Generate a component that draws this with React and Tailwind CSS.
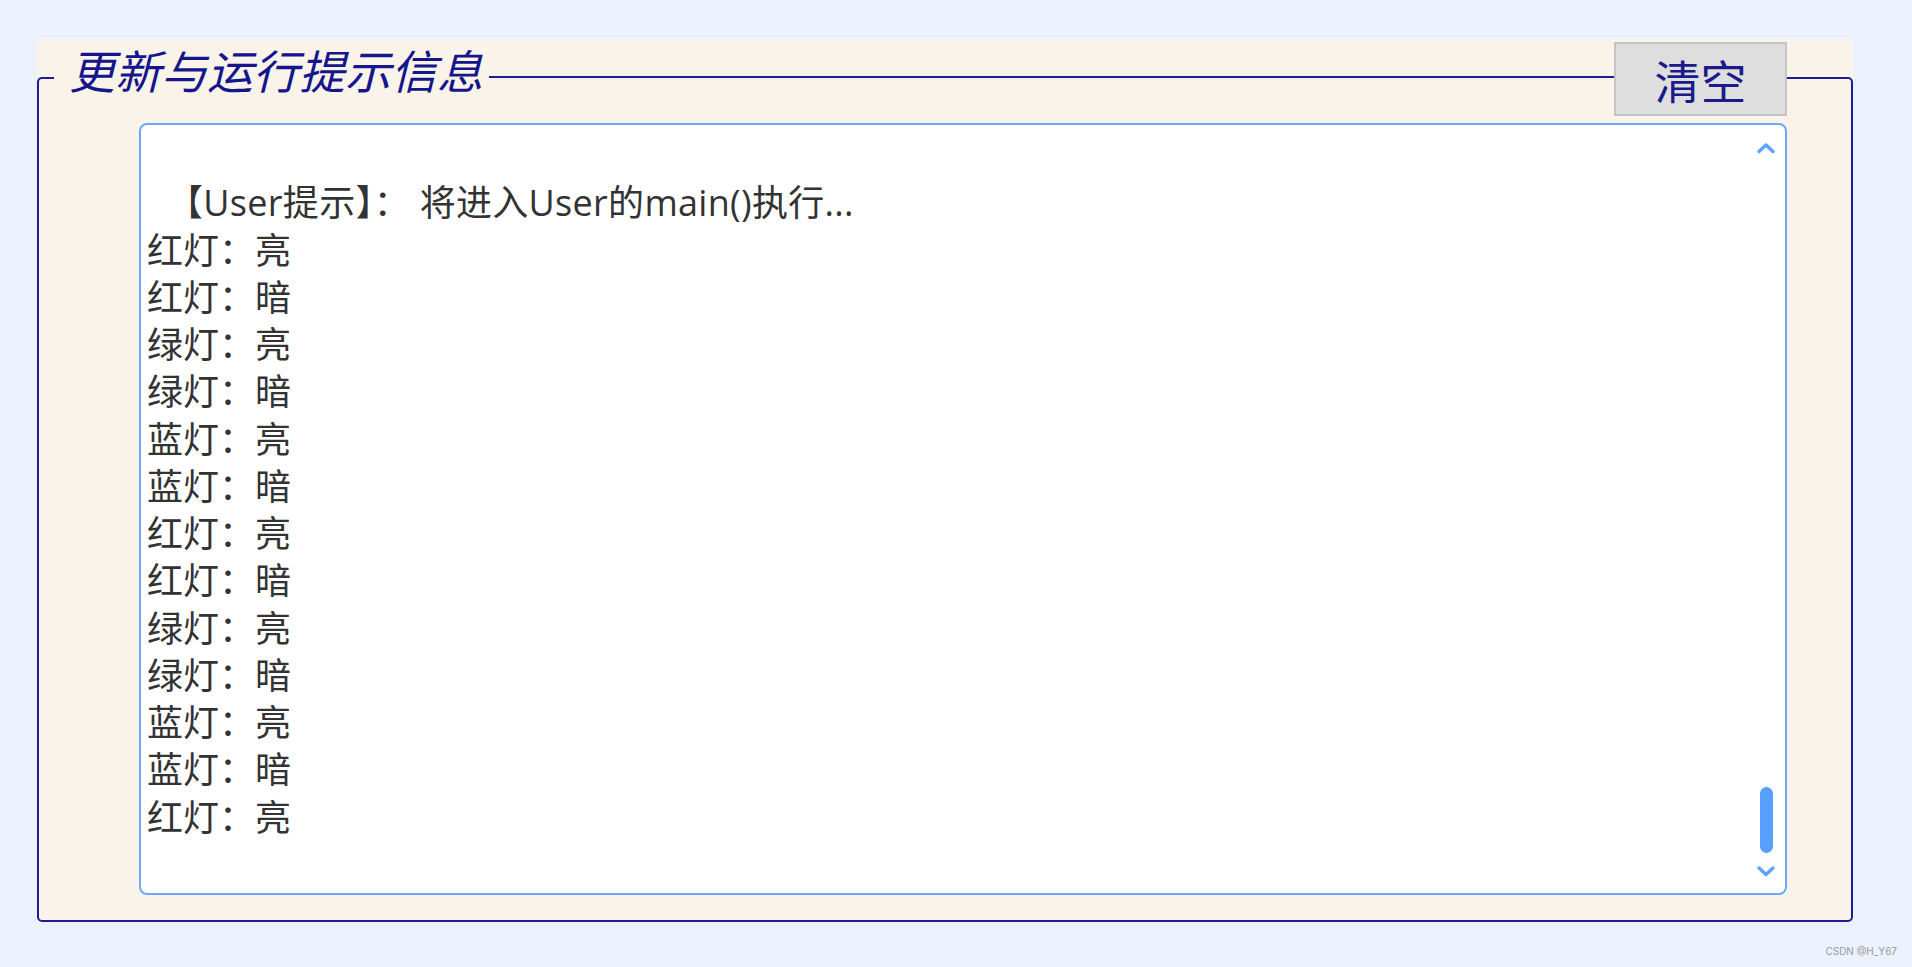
import React from "react";

const lines = [
  "红灯：亮",
  "红灯：暗",
  "绿灯：亮",
  "绿灯：暗",
  "蓝灯：亮",
  "蓝灯：暗",
  "红灯：亮",
  "红灯：暗",
  "绿灯：亮",
  "绿灯：暗",
  "蓝灯：亮",
  "蓝灯：暗",
  "红灯：亮",
];

const Chevron = ({ down }) => (
  <svg width="20" height="12" viewBox="0 0 20 12" className="block">
    <polyline
      points={down ? "3,3 10,9.5 17,3" : "3,9.5 10,3 17,9.5"}
      fill="none"
      stroke="#5ca2ff"
      strokeWidth="3.4"
      strokeLinecap="round"
      strokeLinejoin="round"
    />
  </svg>
);

const App = () => {
  return (
    <div className="flex min-h-screen w-full flex-col bg-[#ebf1fd] pt-[39px] font-['Noto_Sans_CJK_SC',sans-serif]">
      <div className="ml-[37px] w-[1816px] bg-[#faf3e9]">
        <fieldset className="m-0 min-w-0 rounded-[5px] border-2 border-[#1c1c94] pr-[64px] pl-[15px] pb-[25px]">
          <legend className="flex w-full items-start pt-[3px]">
            {/* title */}
            <span className="mt-[4px] pr-[6px] pl-[15px] text-[46px] leading-[46px] italic text-[#15158c]">
              更新与运行提示信息
            </span>
            <div className="mt-[34px] h-[2px] flex-1 bg-[#1c1c94]" />
            <button className="flex h-[74px] w-[173px] items-center justify-center border-2 border-[#c4c4c4] bg-[#dedede] text-[46px] leading-none text-[#1a1a8a]">
              清空
            </button>
          </legend>

          <div className="mt-[7px] ml-[85px] flex h-[772px] w-[1648px] rounded-[8px] border-2 border-[#6aa9fb] bg-white">
            <div className="flex-1 pt-[7px] pl-[6px] font-['Open_Sans','Noto_Sans_CJK_SC',sans-serif] text-[36px] leading-[47.25px] text-[#333333]">
              <div className="h-[47.25px]" />
              <div className="whitespace-pre pl-[20px] tracking-[0.3px]">【User提示】： 将进入User的main()执行...</div>
              {lines.map((l, i) => (
                <div key={i}>{l}</div>
              ))}
            </div>
            {/* scrollbar */}
            <div className="flex w-[38px] flex-col items-center pt-[17px] pb-[16px]">
              <Chevron />
              <div className="flex-1" />
              <div className="h-[66px] w-[13px] rounded-full bg-[#57a0ff]" />
              <div className="mt-[12px]">
                <Chevron down />
              </div>
            </div>
          </div>
        </fieldset>
      </div>
      <div className="mt-[22px] flex justify-end pr-[15px] font-['Inter',sans-serif] text-[10px] text-[#9a9a9a]">
        CSDN @H_Y67
      </div>
    </div>
  );
};

export default App;
